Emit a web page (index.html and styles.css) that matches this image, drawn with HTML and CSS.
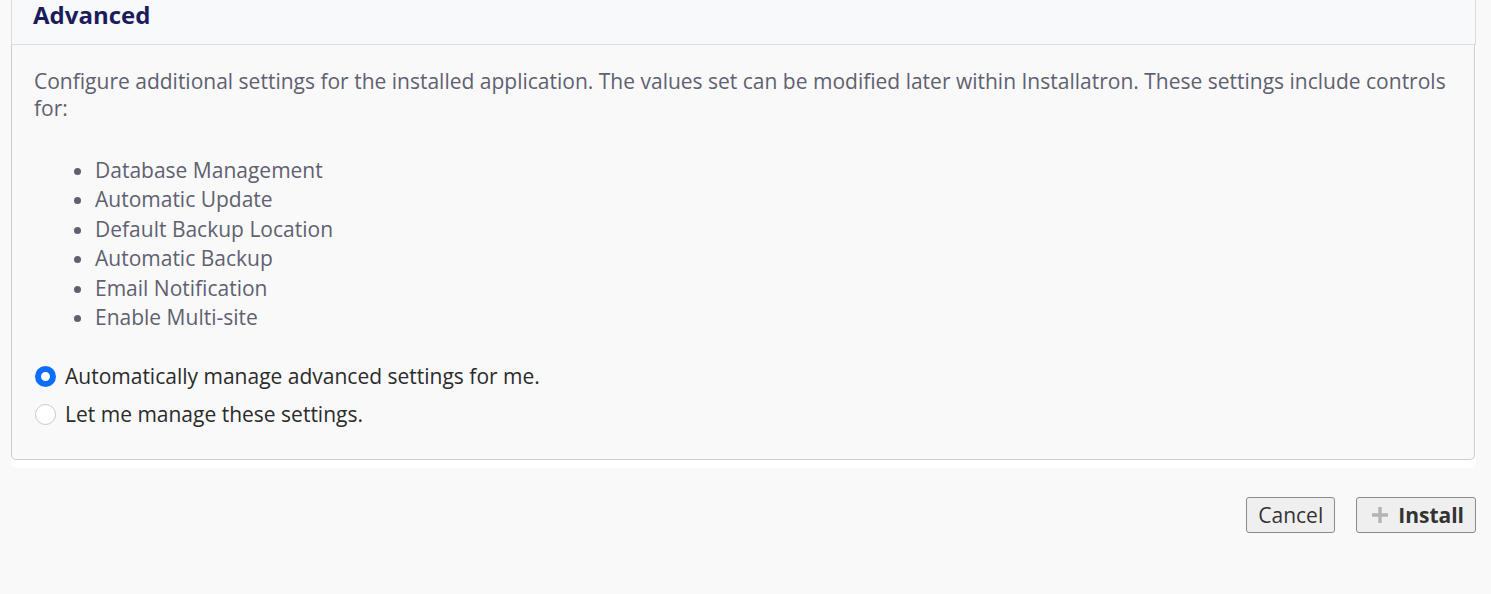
FILE: index.html
```html
<!DOCTYPE html>
<html>
<head>
<meta charset="utf-8">
<link rel="stylesheet" href="styles.css">
</head>
<body>
<div class="page">
  <div class="card">
    <div class="card-head"><h2 class="title">Advanced</h2></div>
    <div class="card-body">
      <p class="intro">Configure additional settings for the installed application. The values set can be modified later within Installatron. These settings include controls for:</p>
      <ul class="features">
        <li>Database Management</li>
        <li>Automatic Update</li>
        <li>Default Backup Location</li>
        <li>Automatic Backup</li>
        <li>Email Notification</li>
        <li>Enable Multi-site</li>
      </ul>
      <div class="choices">
        <label class="choice"><span class="radio checked"></span>Automatically manage advanced settings for me.</label>
        <label class="choice"><span class="radio"></span>Let me manage these settings.</label>
      </div>
    </div>
  </div>
  <div class="actions">
    <button class="btn">Cancel</button>
    <button class="btn primary"><svg class="plus" width="18" height="18" viewBox="0 0 18 18"><path d="M9 1v16M1 9h16" stroke="#b4b4b4" stroke-width="3.4" fill="none"/></svg>Install</button>
  </div>
</div>
</body>
</html>
```
FILE: styles.css
```css
html, body {
  margin: 0;
  padding: 0;
  background: #f9f9f9;
  font-family: "Open Sans", "DejaVu Sans", sans-serif;
}
.page {
  padding: 0 15px 0 11px;
}
.card {
  margin-top: -12px;
  background: #ffffff;
  border-radius: 0 0 6px 6px;
  padding-bottom: 8px;
}
.card-head {
  height: 57px;
  box-sizing: border-box;
  background: #f8f9fb;
  border: 1px solid #dcdcdc;
  border-top: none;
  padding: 11px 21px 0;
}
.title {
  margin: 0;
  font-size: 24px;
  font-weight: 700;
  color: #1c1c5c;
  line-height: 32px;
}
.card-body {
  background: #f9f9f9;
  border: 1px solid #c9cdd4;
  border-top: none;
  margin-right: 1px;
  border-radius: 0 0 5px 5px;
  padding: 23px 22px 34px 22px;
}
.intro {
  margin: 0;
  font-size: 21px;
  line-height: 27px;
  color: #5f6170;
}
.features {
  margin: 34px 0 0;
  padding-left: 61px;
  font-size: 21px;
  line-height: 29.4px;
  color: #5f6170;
}
.choices {
  margin-top: 33px;
  display: flex;
  flex-direction: column;
  gap: 16px;
}
.choice {
  display: flex;
  align-items: center;
  font-size: 21px;
  line-height: 22px;
  color: #2b2b2b;
}
.radio {
  width: 21px;
  height: 21px;
  box-sizing: border-box;
  border-radius: 50%;
  border: 1px solid #c8c8c8;
  background: #fff;
  margin: 0 9px 0 1px;
  flex: none;
}
.radio.checked {
  border: 6px solid #0d6efd;
}
.actions {
  display: flex;
  justify-content: flex-end;
  gap: 21px;
  margin-top: 29px;
}
.btn {
  height: 36px;
  box-sizing: border-box;
  border: 1px solid #8a8a8a;
  border-radius: 3px;
  background: #efefef;
  font-family: "Open Sans", "DejaVu Sans", sans-serif;
  font-size: 21px;
  color: #333;
  padding: 0 11px;
  display: flex;
  align-items: center;
}
.btn.primary {
  font-weight: 700;
  padding: 0 11px 0 14px;
}
.plus {
  margin-right: 9px;
}
```
